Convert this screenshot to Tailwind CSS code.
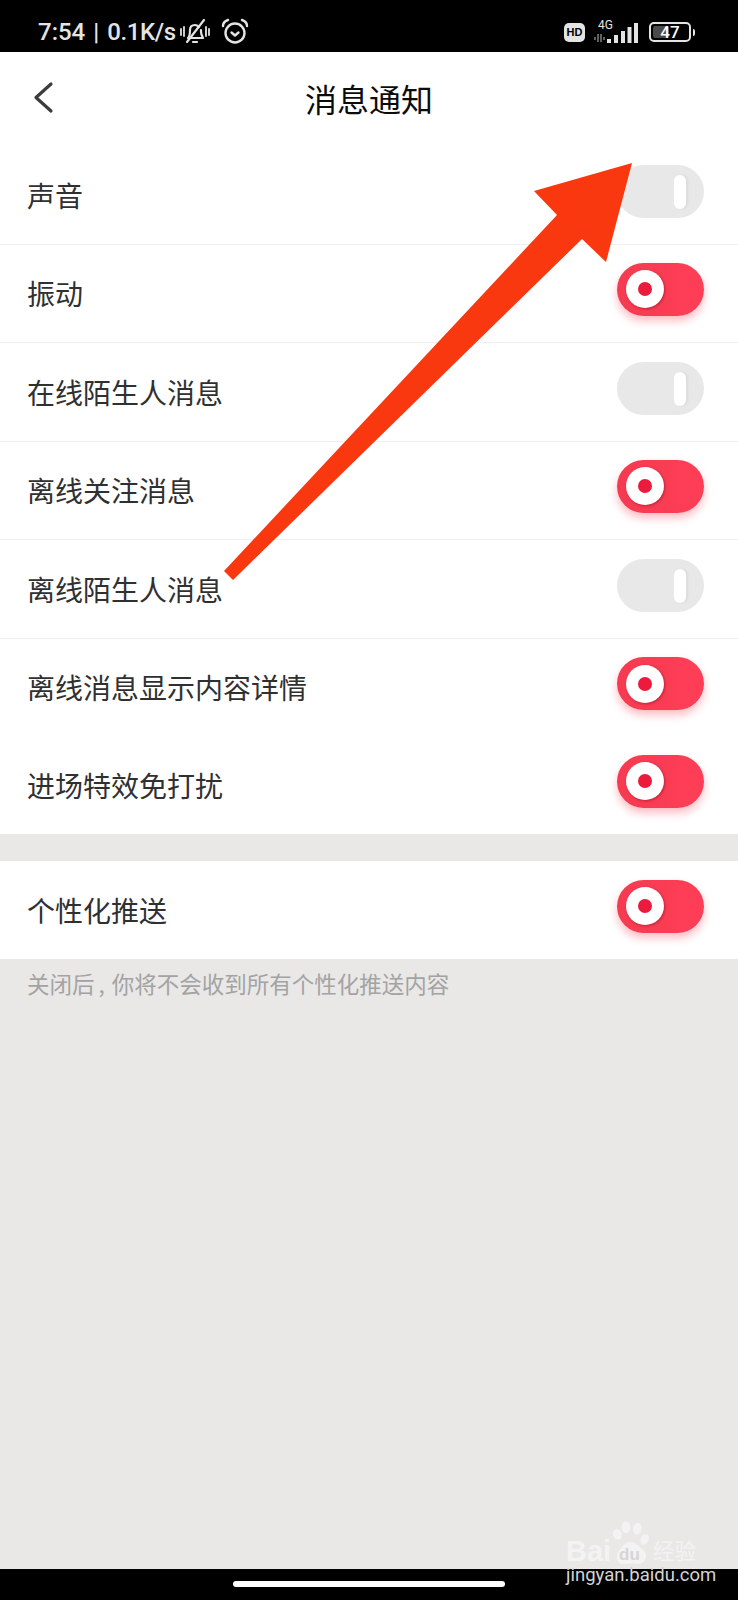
<!DOCTYPE html>
<html lang="zh">
<head>
<meta charset="utf-8">
<script src="https://cdn.jsdelivr.net/npm/@tailwindcss/browser@4"></script>
</head>
<body class="m-0">
<div class="relative w-[738px] h-[1600px] overflow-hidden flex flex-col bg-[#e9e8e7] font-['Noto_Sans_CJK_SC','Noto_Sans',sans-serif]">

  <div class="h-[52px] shrink-0 bg-black flex items-center justify-between pl-[38px] pr-[43px] pt-[12px] text-[#e4e4e4]">
    <div class="flex items-center">
      <span class="font-['Roboto',sans-serif] font-medium text-[24px] leading-none whitespace-nowrap [word-spacing:2px]">7:54 | <span class="tracking-[-0.4px]">0.1K/s</span></span>
      <svg class="ml-[4px]" width="30" height="30" viewBox="0 0 30 30" fill="none" stroke="#e4e4e4" stroke-width="2.2" stroke-linecap="round" stroke-linejoin="round">
        <path d="M8 21c2-2 2-5 2-8 0-3 2-5 5-5 2 0 3 1 4 2M21 13v2c0 2 1 4 2 6H11" />
        <path d="M13 25h4M24 3 7 25" />
        <path d="M1 12v6M4 10v9M26 10v9M29 12v6" stroke-width="1.8" />
      </svg>
      <svg class="ml-[11px]" width="28" height="28" viewBox="0 0 28 28" fill="none" stroke="#e4e4e4" stroke-width="2.4" stroke-linecap="round" stroke-linejoin="round">
        <circle cx="14" cy="15" r="9.500" />
        <path d="M10.500 14.500l3.500 3 3.500-3" />
        <path d="M2 8c0-3 2-5 5-6M26 8c0-3-2-5-5-6" />
      </svg>
    </div>
    <div class="flex items-center">
      <div class="w-[21px] h-[19px] rounded-[5px] bg-[#e4e4e4] text-black font-['Liberation_Sans',sans-serif] font-bold text-[11px] leading-[19px] text-center">HD</div>
      <svg class="ml-[7px]" width="46" height="30" viewBox="0 0 46 30">
        <text x="6" y="12" font-size="12" fill="#e4e4e4" font-family="Roboto, sans-serif">4G</text>
        <path d="M3 20v3M6 17v8M9 17v8M12 20v3" stroke="#777" stroke-width="1.600" />
        <rect x="15" y="22" width="4" height="4" fill="#e4e4e4" />
        <rect x="22" y="18" width="4" height="8" fill="#e4e4e4" />
        <rect x="29" y="14" width="4" height="12" fill="#e4e4e4" />
        <rect x="35.500" y="10" width="4" height="16" fill="#e4e4e4" />
        <rect x="42" y="6" width="4" height="20" fill="#e4e4e4" />
      </svg>
      <div class="relative ml-[11px] w-[42px] h-[20px] rounded-[5px] border-2 border-[#e4e4e4] p-[2px]">
        <div class="h-full w-[47%] rounded-[2px] bg-[#4a4a4a]"></div>
        <span class="absolute inset-0 text-center font-['Roboto',sans-serif] font-medium text-[17px] leading-[16px] text-white">47</span>
      </div>
      <div class="ml-[2px] w-[2px] h-[7px] rounded-r-sm bg-[#e4e4e4]"></div>
    </div>
  </div>

  <div class="h-[94px] shrink-0 bg-white flex items-center justify-center relative">
    <svg class="absolute left-[32px] top-[29px]" width="24" height="34" viewBox="0 0 24 34" fill="none" stroke="#3c3c3c" stroke-width="3.200" stroke-linecap="round" stroke-linejoin="round">
      <path d="M19 3 4 16.500 19 30" />
    </svg>
    <span class="-mt-[3px] text-[32px] leading-none text-[#0c0c0c]">消息通知</span>
  </div>

  <div class="bg-white shrink-0">
    <div class="h-[98.500px] border-b border-[#efefef] flex items-center justify-between pl-[27px] pr-[34px]">
      <span class="text-[28px] text-[#303030]">声音</span>
      <div class="-mt-[6px] w-[87px] h-[53px] rounded-full bg-[#e8e8e8] flex items-center justify-end pr-[18px]">
        <div class="w-[12px] h-[34px] rounded-full bg-white shadow-[2px_0_3px_rgba(0,0,0,0.06)]"></div>
      </div>
    </div>
    <div class="h-[98.500px] border-b border-[#efefef] flex items-center justify-between pl-[27px] pr-[34px]">
      <span class="text-[28px] text-[#303030]">振动</span>
      <div class="-mt-[8px] w-[87px] h-[53px] rounded-full bg-linear-to-r from-[#f53b51] to-[#ff3e56] shadow-[0_5px_8px_rgba(253,61,83,0.35)] flex items-center pl-[9px]">
        <div class="w-[38px] h-[38px] rounded-full bg-white shadow-[1px_1px_3px_rgba(120,0,20,0.45)] flex items-center justify-center">
          <div class="w-[14px] h-[14px] rounded-full bg-[#ec1a3c]"></div>
        </div>
      </div>
    </div>
    <div class="h-[98.500px] border-b border-[#efefef] flex items-center justify-between pl-[27px] pr-[34px]">
      <span class="text-[28px] text-[#303030]">在线陌生人消息</span>
      <div class="-mt-[6px] w-[87px] h-[53px] rounded-full bg-[#e8e8e8] flex items-center justify-end pr-[18px]">
        <div class="w-[12px] h-[34px] rounded-full bg-white shadow-[2px_0_3px_rgba(0,0,0,0.06)]"></div>
      </div>
    </div>
    <div class="h-[98.500px] border-b border-[#efefef] flex items-center justify-between pl-[27px] pr-[34px]">
      <span class="text-[28px] text-[#303030]">离线关注消息</span>
      <div class="-mt-[8px] w-[87px] h-[53px] rounded-full bg-linear-to-r from-[#f53b51] to-[#ff3e56] shadow-[0_5px_8px_rgba(253,61,83,0.35)] flex items-center pl-[9px]">
        <div class="w-[38px] h-[38px] rounded-full bg-white shadow-[1px_1px_3px_rgba(120,0,20,0.45)] flex items-center justify-center">
          <div class="w-[14px] h-[14px] rounded-full bg-[#ec1a3c]"></div>
        </div>
      </div>
    </div>
    <div class="h-[98.500px] border-b border-[#efefef] flex items-center justify-between pl-[27px] pr-[34px]">
      <span class="text-[28px] text-[#303030]">离线陌生人消息</span>
      <div class="-mt-[6px] w-[87px] h-[53px] rounded-full bg-[#e8e8e8] flex items-center justify-end pr-[18px]">
        <div class="w-[12px] h-[34px] rounded-full bg-white shadow-[2px_0_3px_rgba(0,0,0,0.06)]"></div>
      </div>
    </div>
    <div class="h-[97.750px] flex items-center justify-between pl-[27px] pr-[34px]">
      <span class="text-[28px] text-[#303030]">离线消息显示内容详情</span>
      <div class="-mt-[7px] w-[87px] h-[53px] rounded-full bg-linear-to-r from-[#f53b51] to-[#ff3e56] shadow-[0_5px_8px_rgba(253,61,83,0.35)] flex items-center pl-[9px]">
        <div class="w-[38px] h-[38px] rounded-full bg-white shadow-[1px_1px_3px_rgba(120,0,20,0.45)] flex items-center justify-center">
          <div class="w-[14px] h-[14px] rounded-full bg-[#ec1a3c]"></div>
        </div>
      </div>
    </div>
    <div class="h-[97.750px] flex items-center justify-between pl-[27px] pr-[34px]">
      <span class="text-[28px] text-[#303030]">进场特效免打扰</span>
      <div class="-mt-[8px] w-[87px] h-[53px] rounded-full bg-linear-to-r from-[#f53b51] to-[#ff3e56] shadow-[0_5px_8px_rgba(253,61,83,0.35)] flex items-center pl-[9px]">
        <div class="w-[38px] h-[38px] rounded-full bg-white shadow-[1px_1px_3px_rgba(120,0,20,0.45)] flex items-center justify-center">
          <div class="w-[14px] h-[14px] rounded-full bg-[#ec1a3c]"></div>
        </div>
      </div>
    </div>
  </div>

  <div class="h-[27px] shrink-0"></div>

  <div class="h-[98px] shrink-0 bg-white flex items-center justify-between pl-[27px] pr-[34px]">
    <span class="text-[28px] text-[#303030]">个性化推送</span>
    <div class="-mt-[8px] w-[87px] h-[53px] rounded-full bg-linear-to-r from-[#f53b51] to-[#ff3e56] shadow-[0_5px_8px_rgba(253,61,83,0.35)] flex items-center pl-[9px]">
      <div class="w-[38px] h-[38px] rounded-full bg-white shadow-[1px_1px_3px_rgba(120,0,20,0.45)] flex items-center justify-center">
        <div class="w-[14px] h-[14px] rounded-full bg-[#ec1a3c]"></div>
      </div>
    </div>
  </div>

  <p class="pl-[27px] pt-[8px] text-[22.500px] leading-[33px] text-[#a3a3a3] whitespace-nowrap">关闭后<span class="pl-[4px] pr-[7px]">,</span>你将不会收到所有个性化推送内容</p>

  <div class="flex-1"></div>
  <div class="h-[31px] shrink-0 bg-black flex justify-center pt-[12px]">
    <div class="w-[272px] h-[6px] rounded-full bg-white"></div>
  </div>

  <svg class="absolute left-0 top-0 pointer-events-none" width="738" height="1600" viewBox="0 0 738 1600">
    <polygon points="632,163 534,191 557,215 224,571 233,580 582,239 606,262" fill="#f9380f" />
  </svg>

  <div class="absolute left-0 top-0 w-[738px] h-[1600px] pointer-events-none">
    <span class="absolute left-[566px] top-[1537px] font-['Liberation_Sans',sans-serif] font-bold text-[29px] leading-none text-[#f3f3f3]">Bai</span>
    <svg class="absolute left-[610px] top-[1518px]" width="42" height="50" viewBox="210 24 126 150" fill="#f3f3f3">
      <ellipse cx="232" cy="73" rx="13" ry="16" transform="rotate(-25 232 73)" />
      <ellipse cx="258" cy="52" rx="13" ry="18" />
      <ellipse cx="292" cy="56" rx="13" ry="18" transform="rotate(10 292 56)" />
      <ellipse cx="314" cy="88" rx="12" ry="17" transform="rotate(20 314 88)" />
      <path d="M270 95c-15 0-22 15-32 25-12 10-10 42 12 42 12 0 20-4 28-2 15 2 35 4 40-20 2-15-8-20-20-30-8-8-14-15-28-15z" />
    </svg>
    <span class="absolute left-[619px] top-[1546px] font-['Liberation_Sans',sans-serif] font-bold text-[17px] leading-none text-[#d6d6d6]">du</span>
    <span class="absolute left-[653px] top-[1539px] text-[21.500px] leading-none text-[#f3f3f3]">经验</span>
    <span class="absolute left-[566px] top-[1566px] font-['Roboto',sans-serif] text-[18.500px] leading-none text-[#d4d4d4]">jingyan.baidu.com</span>
  </div>
</div>
</body>
</html>
